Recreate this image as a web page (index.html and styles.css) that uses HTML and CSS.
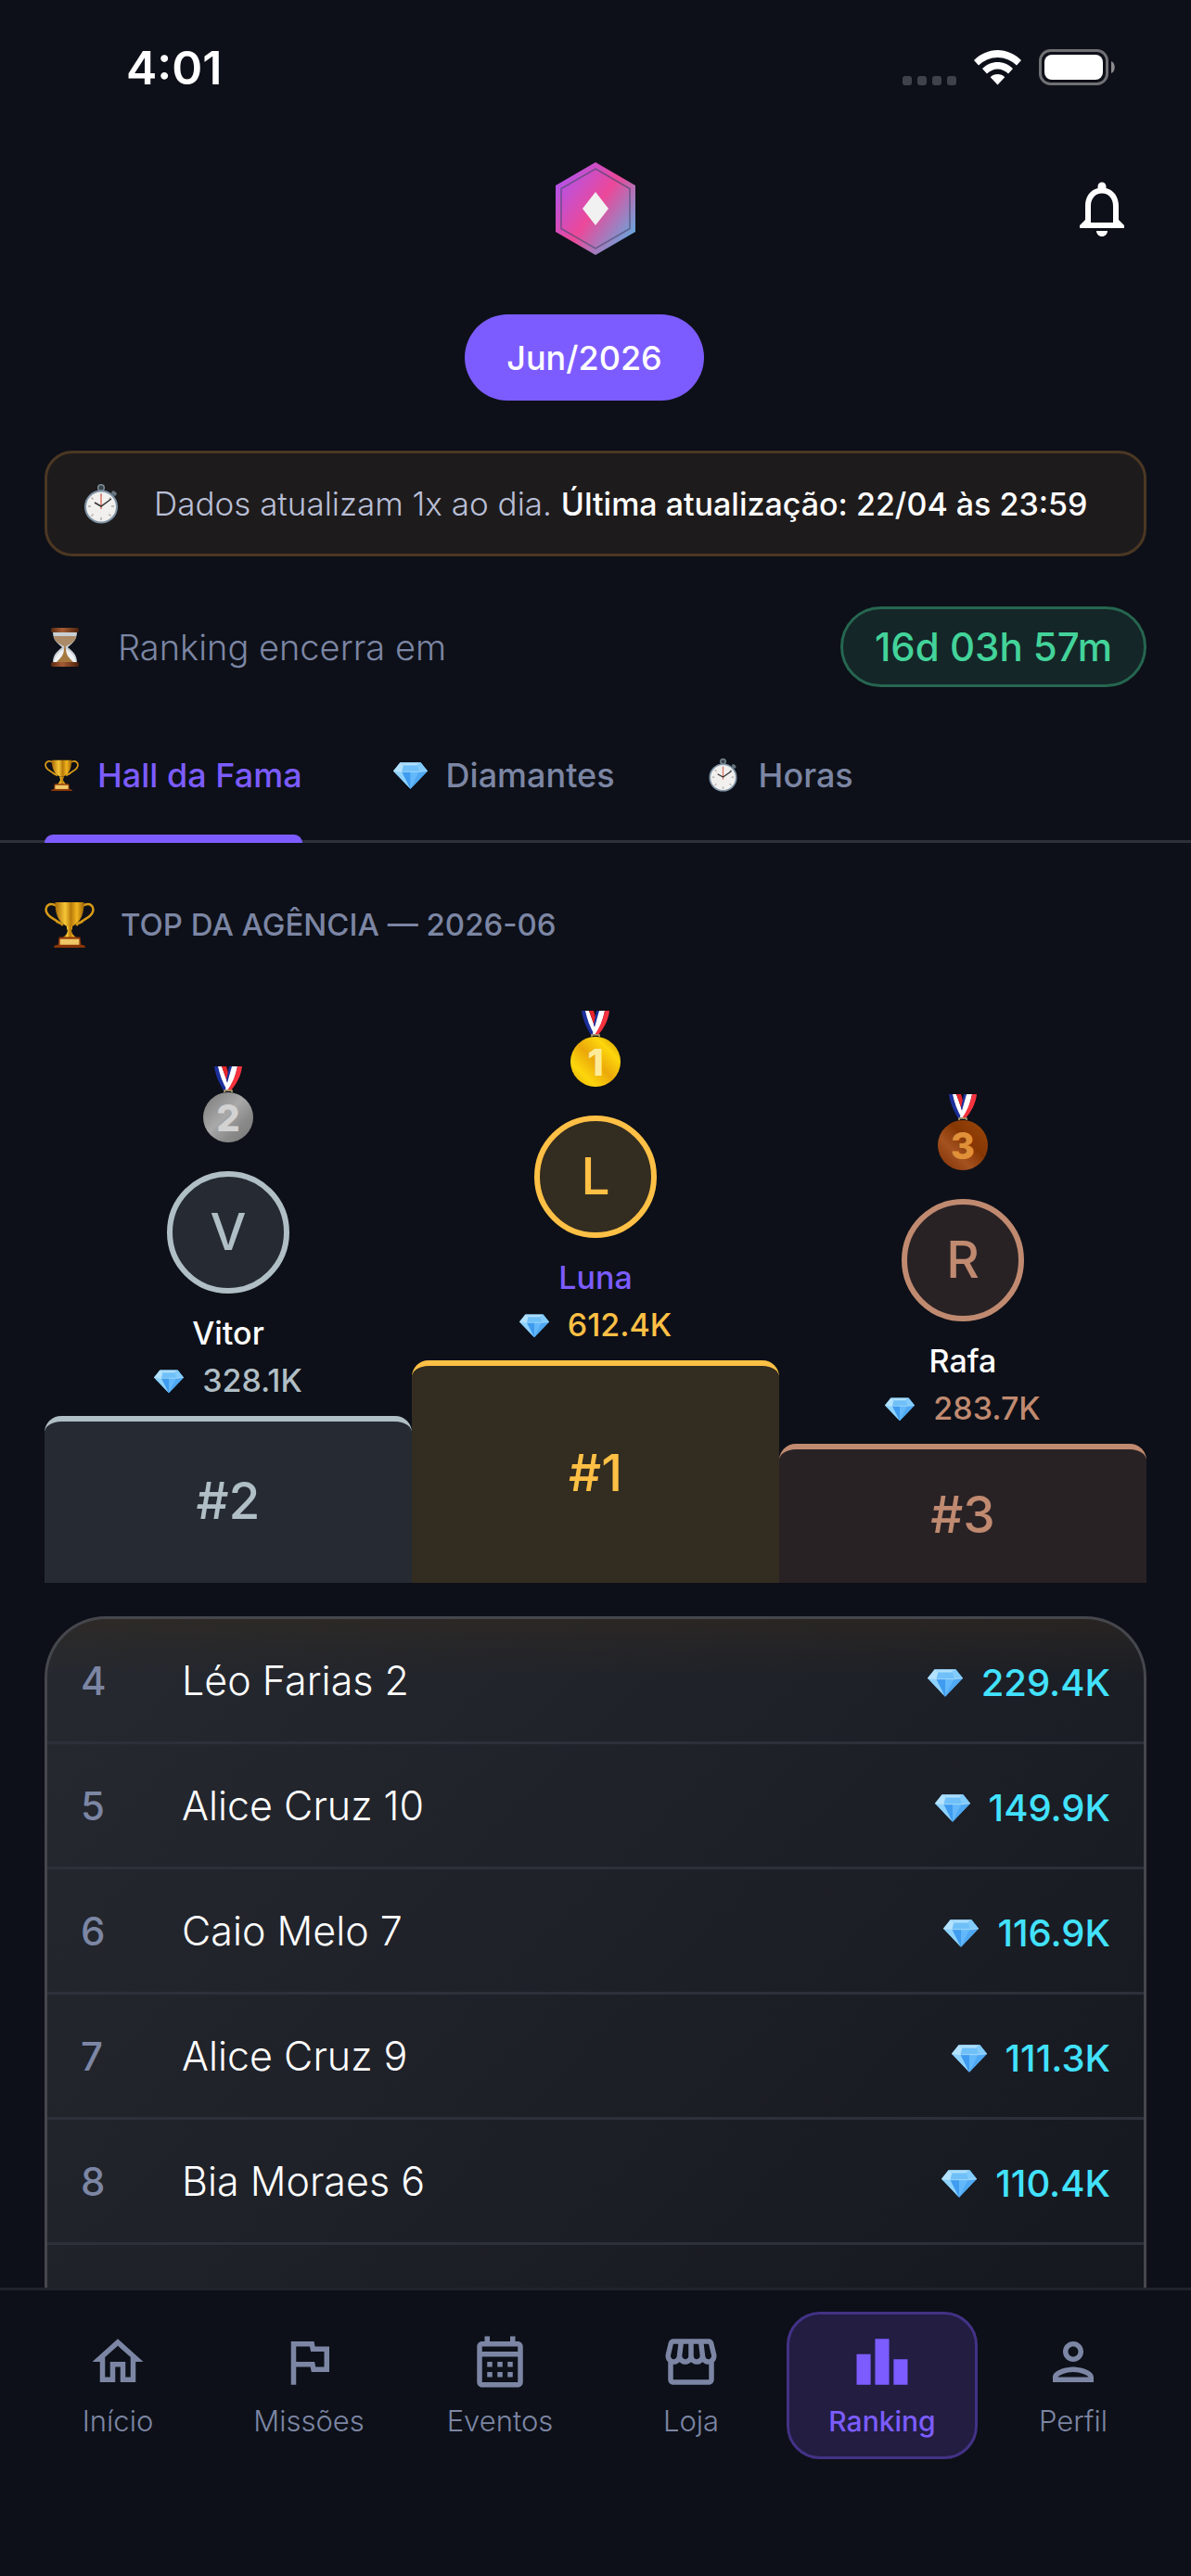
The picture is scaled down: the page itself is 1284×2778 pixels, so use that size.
FILE: index.html
```html
<!DOCTYPE html>
<html lang="pt-BR">
<head>
<meta charset="utf-8">
<title>Ranking</title>
<meta name="viewport" content="width=device-width, initial-scale=1">
<link rel="stylesheet" href="styles.css">
</head>
<body>
<svg class="defs" width="0" height="0" aria-hidden="true">
  <defs>
    <linearGradient id="gold" x1="0" x2="1" y1="0" y2="0"><stop offset="0" stop-color="#a86a06"/><stop offset=".35" stop-color="#f7c637"/><stop offset=".55" stop-color="#b87a0a"/><stop offset=".75" stop-color="#f2b51f"/><stop offset="1" stop-color="#9c6205"/></linearGradient>
    <linearGradient id="m1" x1="0" x2="1" y1="1" y2="0"><stop offset="0" stop-color="#e0a000"/><stop offset=".25" stop-color="#fdd60c"/><stop offset=".5" stop-color="#eba80a"/><stop offset=".75" stop-color="#fdd60c"/><stop offset="1" stop-color="#c88a04"/></linearGradient>
    <linearGradient id="m2" x1="0" x2="1" y1="0" y2="1"><stop offset="0" stop-color="#777"/><stop offset=".45" stop-color="#a9a9a9"/><stop offset=".7" stop-color="#8a8a8a"/><stop offset="1" stop-color="#777"/></linearGradient>
    <linearGradient id="m3" x1="0" x2="1" y1="1" y2="0"><stop offset="0" stop-color="#7a2d02"/><stop offset=".35" stop-color="#a55220"/><stop offset=".6" stop-color="#853603"/><stop offset="1" stop-color="#a14a0c"/></linearGradient>
    <linearGradient id="wood" x1="0" x2="1" y1="0" y2="0"><stop offset="0" stop-color="#5a2a12"/><stop offset=".4" stop-color="#a65c34"/><stop offset="1" stop-color="#4a200c"/></linearGradient>
    <linearGradient id="hex" x1="0" x2="1" y1=".08" y2=".92"><stop offset="0" stop-color="#a855f7"/><stop offset=".5" stop-color="#ec4899"/><stop offset="1" stop-color="#4fb8e8"/></linearGradient>
    <symbol id="diamond" viewBox="0 0 40 32">
      <path fill="#5db6f5" d="M8 1h24l8 10-20 21L0 11z"/>
      <path fill="#a9dcfb" d="M8 1h24l-4 3H12z"/>
      <path fill="#6fc0f8" d="M12 4h16l2 8H10z"/>
      <path fill="#b4e2fd" d="M8 1l4 3-2 8L0 11z"/>
      <path fill="#82cbfa" d="M32 1l-4 3 2 8 10-1z"/>
      <path fill="#8fd2fc" d="M0 11l10 1 10 20z"/>
      <path fill="#3f9cf0" d="M10 12h10v20z"/>
      <path fill="#62b8fa" d="M20 12h10L20 32z"/>
      <path fill="#4fa8f2" d="M40 11l-10 1-10 20z"/>
      <path fill="none" stroke="#c4eafe" stroke-width=".7" d="M0 11l10 1h20l10-1M12 4h16"/>
    </symbol>
    <symbol id="trophy" viewBox="0 0 52 48">
      <path fill="none" stroke="#d79a17" stroke-width="2.4" d="M13 5C5 0 0 5 2 11s9 7 14 12M39 5c8-5 13 0 11 6s-9 7-14 12M12 21c3 0 5 1 7 4M40 21c-3 0-5 1-7 4"/>
      <path fill="url(#gold)" d="M11 1h30c0 12-3 20-12 25h-6C14 21 11 13 11 1z"/>
      <path fill="url(#gold)" d="M23 26h6c0 2 0 3-1 4 0 3 2 6 6 8H18c4-2 6-5 6-8-1-1-1-2-1-4z"/>
      <path fill="#8a3408" d="M15 37h22l1 8 4 1v2H10v-2l4-1z"/>
      <path fill="#f0c766" d="M16 39h20v6H16z"/>
    </symbol>
    <symbol id="watch" viewBox="0 0 38 43">
      <circle cx="19" cy="4" r="3.300" fill="#3a444b" stroke="#7c8b95" stroke-width="1.500"/>
      <rect x="30" y="8" width="6" height="4" rx="2" fill="#66757f" transform="rotate(40 33 10)"/>
      <circle cx="19" cy="24.500" r="18" fill="#7f93a6"/>
      <circle cx="19" cy="24.500" r="16" fill="#f1f0ee"/>
      <g stroke="#aaa" stroke-width="1.400"><path d="M19 10v3M19 36v3M5 24h3M30 24h3M8.500 14.500l2 2M29.500 34.500l-2-2M8.500 34.500l2-2M29.500 14.500l-2 2"/></g>
      <path d="M19 27V11" stroke="#e07a6a" stroke-width="1.600"/>
      <path d="M12 20l7 4 11-8" fill="none" stroke="#333" stroke-width="1.500"/>
    </symbol>
    <symbol id="glass" viewBox="0 0 30 42">
      <path fill="#c9d0d5" d="M2 4h26c0 9-4 12-10 17 6 5 10 8 10 17H2c0-9 4-12 10-17C6 16 2 13 2 4z"/>
      <path fill="#ab8a68" d="M3 9h24c0 5-5 8-11 11v2h-2v-2C8 17 3 14 3 9z"/>
      <path fill="#eef1f3" d="M14 23h2c6 3 10 8 11 14H3c1-6 5-11 11-14z"/>
      <path fill="#a5793f" d="M14 22h2c0 8 4 11 8 15H6c4-4 8-7 8-15z"/>
      <rect width="30" height="5" rx="2" fill="url(#wood)"/><rect y="37" width="30" height="5" rx="2" fill="url(#wood)"/>
    </symbol>
    <symbol id="ribbon" viewBox="0 0 54 28">
      <path fill="#1c2f9c" d="M12 0h7l9 26h-6C16 16 13 8 12 0z"/><path fill="#fff" d="M16 0h4l8 22-2 4C21 18 18 9 16 0z"/><path fill="#e8242b" d="M20 0h5l4 14-2 6z"/>
      <path fill="#1c2f9c" d="M28 0h4l-5 20-2-5z"/><path fill="#fff" d="M31 0h6c-2 10-5 18-9 25h-4z"/><path fill="#f5333f" d="M37 0h5c-1 10-6 19-12 26h-4C31 19 35 10 37 0z"/>
      <path fill="none" stroke="#b9a774" stroke-width="1.500" d="M23 28v-2h8v2"/>
    </symbol>
  </defs>
</svg>

<div class="app">
  <div class="status">
    <span class="clock">4:01</span>
    <div class="signals">
      <span class="dots"><i></i><i></i><i></i><i></i></span>
      <svg class="wifi" viewBox="0 0 51 38" fill="#fff"><path d="M25.500 0C35 0 44 4 51 11l-5 5.500a29 29 0 0 0-41 0L0 11C7 4 16 0 25.500 0z"/><path d="M25.500 13c6 0 12 2.500 16.500 7l-5 5.500a16 16 0 0 0-23 0L9 20c4.500-4.500 10.500-7 16.500-7z"/><path d="M25.500 26c3 0 5.700 1.200 7.800 3.200L25.500 37.500l-7.800-8.300c2-2 4.800-3.200 7.800-3.200z"/></svg>
      <svg class="battery" viewBox="0 0 83 39"><rect x="1.500" y="1.500" width="72" height="36" rx="11" fill="none" stroke="#6f7074" stroke-width="3"/><rect x="6" y="6" width="63" height="27" rx="8" fill="#fff"/><path fill="#8a8b8e" d="M78 13c5 2 5 11 0 13z"/></svg>
    </div>
  </div>

  <header class="top">
    <svg class="logo" viewBox="0 0 86 100"><path fill="url(#hex)" d="M43 0l43 25v50L43 100 0 75V25z"/><path fill="none" stroke="#4b4a70" stroke-opacity=".7" stroke-width="1.500" d="M43 7l37 21.500v43L43 93 6 71.500v-43z"/><path fill="#f1f1f1" d="M43 32l14 18-14 18-14-18z"/></svg>
    <button class="bell" type="button" aria-label="Notificações"><svg viewBox="0 0 24 24"><path fill="#fff" d="M12 22c1.100 0 2-.9 2-2h-4c0 1.100.89 2 2 2zm6-6v-5c0-3.070-1.640-5.640-4.500-6.320V4c0-.83-.67-1.500-1.500-1.500s-1.500.67-1.500 1.500v.68C7.630 5.360 6 7.920 6 11v5l-2 2v1h16v-1l-2-2zm-2 1H8v-6c0-2.480 1.510-4.500 4-4.500s4 2.020 4 4.500v6z"/></svg></button>
  </header>

  <main class="content">
    <div class="months"><button class="month" type="button">Jun/2026</button></div>

    <p class="notice"><svg class="notice-icon"><use href="#watch"/></svg><span>Dados atualizam 1x ao dia. <strong>Última atualização: 22/04 às 23:59</strong></span></p>

    <div class="countdown">
      <svg class="glass"><use href="#glass"/></svg>
      <span class="countdown-label">Ranking encerra em</span>
      <span class="timer">16d 03h 57m</span>
    </div>

    <div class="tabs" role="tablist">
      <button class="tab active" role="tab" aria-selected="true" type="button"><svg class="tab-icon"><use href="#trophy"/></svg>Hall da Fama</button>
      <button class="tab" role="tab" aria-selected="false" type="button"><svg class="tab-icon"><use href="#diamond"/></svg>Diamantes</button>
      <button class="tab" role="tab" aria-selected="false" type="button"><svg class="tab-icon"><use href="#watch"/></svg>Horas</button>
    </div>

    <h2 class="section-title"><svg class="title-icon"><use href="#trophy"/></svg>TOP DA AGÊNCIA — 2026-06</h2>

    <div class="podium">
      <section class="place silver">
        <svg class="medal" viewBox="0 0 54 82"><use href="#ribbon" width="54" height="28"/><circle cx="27" cy="55" r="27" fill="url(#m2)"/><text x="27" y="70" text-anchor="middle" fill="#d2d2d2">2</text></svg>
        <div class="avatar">V</div>
        <div class="name">Vitor</div>
        <div class="score"><svg class="gem"><use href="#diamond"/></svg>328.1K</div>
        <div class="block">#2</div>
      </section>
      <section class="place gold">
        <svg class="medal" viewBox="0 0 54 82"><use href="#ribbon" width="54" height="28"/><circle cx="27" cy="55" r="27" fill="url(#m1)"/><text x="27" y="70" text-anchor="middle" fill="#fdeb9a">1</text></svg>
        <div class="avatar">L</div>
        <div class="name">Luna</div>
        <div class="score"><svg class="gem"><use href="#diamond"/></svg>612.4K</div>
        <div class="block">#1</div>
      </section>
      <section class="place bronze">
        <svg class="medal" viewBox="0 0 54 82"><use href="#ribbon" width="54" height="28"/><circle cx="27" cy="55" r="27" fill="url(#m3)"/><text x="27" y="70" text-anchor="middle" fill="#e09038">3</text></svg>
        <div class="avatar">R</div>
        <div class="name">Rafa</div>
        <div class="score"><svg class="gem"><use href="#diamond"/></svg>283.7K</div>
        <div class="block">#3</div>
      </section>
    </div>

    <ol class="list" start="4">
      <li class="row"><span class="rank">4</span><span class="who">Léo Farias 2</span><span class="points"><svg class="gem-lg"><use href="#diamond"/></svg>229.4K</span></li>
      <li class="row"><span class="rank">5</span><span class="who">Alice Cruz 10</span><span class="points"><svg class="gem-lg"><use href="#diamond"/></svg>149.9K</span></li>
      <li class="row"><span class="rank">6</span><span class="who">Caio Melo 7</span><span class="points"><svg class="gem-lg"><use href="#diamond"/></svg>116.9K</span></li>
      <li class="row"><span class="rank">7</span><span class="who">Alice Cruz 9</span><span class="points"><svg class="gem-lg"><use href="#diamond"/></svg>111.3K</span></li>
      <li class="row"><span class="rank">8</span><span class="who">Bia Moraes 6</span><span class="points"><svg class="gem-lg"><use href="#diamond"/></svg>110.4K</span></li>
    </ol>
  </main>

  <nav class="nav">
    <a class="nav-item" href="#inicio"><svg viewBox="0 0 24 24"><path d="M12 5.690l5 4.500V18h-2v-6H9v6H7v-7.810l5-4.500M12 3L2 12h3v8h6v-6h2v6h6v-8h3L12 3z"/></svg>Início</a>
    <a class="nav-item" href="#missoes"><svg viewBox="0 0 24 24"><path d="M12.360 6l.4 2H18v6h-3.360l-.4-2H7V6h5.360M14 4H5v17h2v-7h5.600l.4 2h7V6h-5.600L14 4z"/></svg>Missões</a>
    <a class="nav-item" href="#eventos"><svg viewBox="0 0 24 24"><path d="M19 4h-1V2h-2v2H8V2H6v2H5c-1.110 0-1.990.9-1.990 2L3 20c0 1.100.89 2 2 2h14c1.100 0 2-.9 2-2V6c0-1.100-.9-2-2-2zm0 16H5V10h14v10zm0-12H5V6h14v2zM9 14H7v-2h2v2zm4 0h-2v-2h2v2zm4 0h-2v-2h2v2zm-8 4H7v-2h2v2zm4 0h-2v-2h2v2zm4 0h-2v-2h2v2z"/></svg>Eventos</a>
    <a class="nav-item" href="#loja"><svg viewBox="0 0 24 24"><path d="M21.900 8.890l-1.050-4.370c-.22-.9-1-1.520-1.910-1.520H5.050c-.9 0-1.690.63-1.900 1.520L2.100 8.890c-.24 1.020-.02 2.060.62 2.880.08.11.19.19.28.29V19c0 1.100.9 2 2 2h14c1.100 0 2-.9 2-2v-6.940c.09-.09.2-.18.28-.28.64-.82.87-1.870.62-2.890zm-2.990-3.900l1.050 4.370c.1.420.01.84-.25 1.170-.14.180-.44.470-.94.470-.61 0-1.140-.49-1.210-1.140L16.980 5l1.930-.01zM13 5h1.960l.54 4.520c.05.39-.07.78-.33 1.070-.22.260-.54.410-.95.410-.67 0-1.220-.59-1.220-1.310V5zM8.490 9.520L9.040 5H11v4.690c0 .72-.55 1.310-1.290 1.310-.34 0-.65-.15-.89-.41-.25-.29-.37-.68-.33-1.070zm-4.450-.16L5.050 5h1.970l-.58 4.860c-.08.65-.6 1.140-1.210 1.140-.49 0-.8-.29-.93-.47-.27-.32-.36-.75-.26-1.170zM5 19v-6.030c.08.010.15.030.23.030.87 0 1.660-.36 2.240-.95.600.6 1.400.95 2.310.95.870 0 1.650-.36 2.230-.93.590.57 1.390.93 2.290.93.840 0 1.640-.35 2.240-.95.580.59 1.370.95 2.240.95.080 0 .15-.02.23-.03V19H5z"/></svg>Loja</a>
    <a class="nav-item current" href="#ranking" aria-current="page"><svg viewBox="0 0 24 24"><path d="M2 9h5.500v12H2zM9.250 3h5.500v18h-5.500zM16.500 11H22v10h-5.500z"/></svg>Ranking</a>
    <a class="nav-item" href="#perfil"><svg viewBox="0 0 24 24"><path d="M12 6c1.100 0 2 .9 2 2s-.9 2-2 2-2-.9-2-2 .9-2 2-2m0 10c2.700 0 5.800 1.290 6 2H6c.23-.72 3.310-2 6-2m0-12C9.790 4 8 5.790 8 8s1.790 4 4 4 4-1.790 4-4-1.790-4-4-4zm0 10c-2.670 0-8 1.340-8 4v2h16v-2c0-2.660-5.330-4-8-4z"/></svg>Perfil</a>
  </nav>
</div>
</body>
</html>
```
FILE: styles.css
```css
*, *::before, *::after { box-sizing: border-box; }
body { margin: 0; background: #0d1018; color: #fff; font-family: Inter, "Noto Sans", sans-serif; font-size: 36px; }
button { font: inherit; color: inherit; background: none; border: 0; padding: 0; margin: 0; }
svg { display: block; flex: none; }
.defs { position: absolute; }
.app { height: 100vh; display: flex; flex-direction: column; }

.status { flex: none; height: 141px; padding: 4px 81px 0 136px; display: flex; align-items: center; justify-content: space-between; }
.clock { font-size: 50px; font-weight: 600; line-height: 60px; }
.signals { display: flex; align-items: center; }
.dots { display: flex; gap: 6px; align-self: flex-end; margin-right: 19px; }
.dots i { width: 10px; height: 10px; border-radius: 3px; background: #3f424a; }
.wifi { width: 51px; height: 38px; margin-right: 19px; }
.battery { width: 83px; height: 39px; }

.top { flex: none; height: 168px; padding: 0 60px; display: grid; grid-template-columns: 1fr auto 1fr; align-items: center; }
.logo { width: 86px; height: 100px; grid-column: 2; }
.bell { grid-column: 3; justify-self: end; }
.bell svg { width: 72px; height: 72px; }

.content { flex: 1; min-height: 0; overflow: hidden; padding: 30px 48px 0; display: flex; flex-direction: column; }
.content > * { flex: none; }
.months { display: flex; justify-content: center; margin-bottom: 54px; }
.month { height: 93px; padding: 0 45px; margin-right: 24px; border-radius: 47px; background: #7c5cff; font-weight: 500; }

.notice { margin: 0 0 54px; height: 114px; padding: 0 39px; display: flex; align-items: center; gap: 38px; border: 3px solid #4b3723; border-radius: 30px; background: #1e1b1c; color: #b9bfd6; font-size: 35px; font-weight: 300; white-space: nowrap; }
.notice strong { color: #fff; font-size: 34px; font-weight: 500; }
.notice-icon { width: 38px; height: 43px; }

.countdown { display: flex; align-items: center; margin-bottom: 48px; }
.glass { width: 30px; height: 42px; margin: 0 42px 0 7px; }
.countdown-label { flex: 1; color: #7c86a4; font-size: 38px; font-weight: 300; }
.timer { height: 87px; line-height: 81px; padding: 0 34px; border: 3px solid #266650; border-radius: 44px; background: #142627; color: #43d39a; font-size: 42px; font-weight: 500; }

.tabs { display: flex; gap: 98px; margin: 0 -48px; padding: 0 48px; height: 120px; border-bottom: 3px solid #2d3039; }
.tab { display: flex; align-items: center; gap: 20px; height: 120px; padding-bottom: 18px; border-bottom: 9px solid transparent; color: #7c86a4; font-weight: 500; position: relative; }
.tab.active { color: #7c5cff; }
.tab.active::after { content: ""; position: absolute; left: 0; right: 0; bottom: -9px; height: 9px; border-radius: 9px 9px 0 0; background: #7c5cff; }
.tab-icon { width: 37px; height: 36px; }

.section-title { display: flex; align-items: center; gap: 28px; margin: 58px 0 64px; height: 59px; color: #7c86a4; font-size: 33px; font-weight: 500; }
.title-icon { width: 54px; height: 50px; }

.podium { display: grid; grid-template-columns: repeat(3, 1fr); align-items: end; margin-bottom: 36px; }
.place { display: flex; flex-direction: column; align-items: center; }
.medal { width: 54px; height: 82px; margin-bottom: 31px; }
.medal text { font-size: 40px; font-weight: 800; }
.avatar { width: 132px; height: 132px; padding-bottom: 2px; border: 6px solid; border-radius: 50%; display: flex; align-items: center; justify-content: center; font-size: 55px; font-weight: 500; }
.name { margin-top: 18px; line-height: 50px; font-size: 34px; font-weight: 500; }
.score { display: flex; align-items: center; gap: 20px; line-height: 52px; font-size: 34px; font-weight: 500; }
.gem { width: 32px; height: 27px; }
.block { align-self: stretch; margin-top: 12px; padding-bottom: 4px; border-top: 6px solid; border-radius: 18px 18px 0 0; display: flex; align-items: center; justify-content: center; font-size: 55px; font-weight: 500; }
.silver .block { height: 180px; } .gold .block { height: 240px; } .bronze .block { height: 150px; }
.silver .avatar, .silver .score, .silver .block { color: #b0bec5; }
.gold .avatar, .gold .score, .gold .block { color: #ffc045; }
.bronze .avatar, .bronze .score, .bronze .block { color: #c08a70; }
.silver .avatar, .silver .block { background-color: #252a33; }
.gold .avatar, .gold .block { background-color: #332c20; }
.bronze .avatar, .bronze .block { background-color: #292225; }
.gold .name { color: #7c5cff; }

.content > .list { flex: 1 0 auto; margin: 0; padding: 0; list-style: none; border: 3px solid #45474d; border-bottom: 0; border-radius: 66px 66px 0 0; background: linear-gradient(rgba(56, 44, 28, .4), transparent 60px), linear-gradient(135deg, #262930, #16181f); }
.row { height: 135px; padding: 0 36px; display: flex; align-items: center; border-bottom: 3px solid #2d3039; }
.rank { width: 109px; color: #7c86a4; font-size: 42px; font-weight: 500; }
.who { flex: 1; font-size: 43px; font-weight: 300; }
.points { display: flex; align-items: center; gap: 20px; padding-top: 4px; color: #42e2ff; font-size: 40px; font-weight: 500; }
.gem-lg { width: 38px; height: 33px; }

.nav { flex: none; height: 311px; padding: 23px 24px 0; border-top: 3px solid #20232b; display: grid; grid-template-columns: repeat(6, 1fr); align-items: start; }
.nav-item { height: 159px; padding-top: 18px; border: 3px solid transparent; border-radius: 36px; display: flex; flex-direction: column; align-items: center; gap: 12px; color: #7c86a4; text-decoration: none; font-size: 31px; line-height: 38px; font-weight: 300; }
.nav-item svg { width: 66px; height: 66px; fill: currentColor; }
.nav-item.current { border-color: #433286; background: #221d41; color: #7c5cff; font-size: 30px; font-weight: 500; }
```
